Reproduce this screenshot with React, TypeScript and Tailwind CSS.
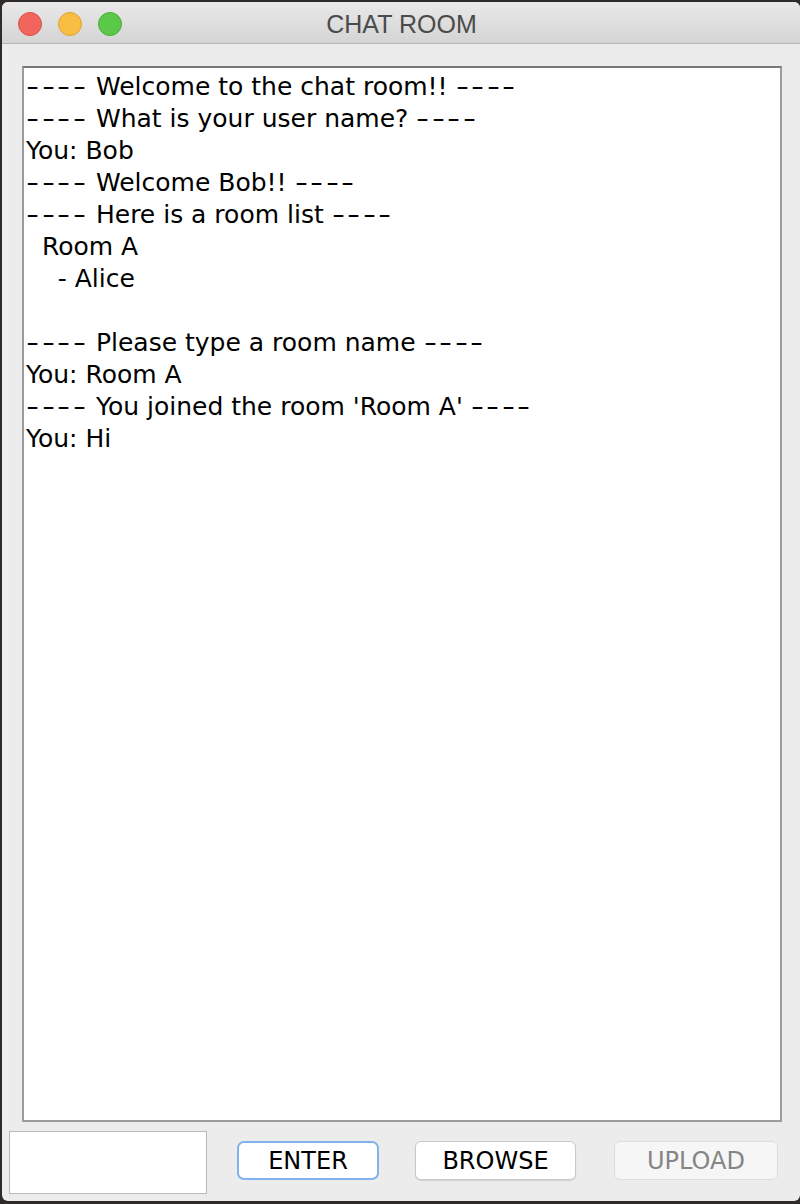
import React from "react";

const lines = [
  "---- Welcome to the chat room!! ----",
  "---- What is your user name? ----",
  "You: Bob",
  "---- Welcome Bob!! ----",
  "---- Here is a room list ----",
  "  Room A",
  "    - Alice",
  "",
  "---- Please type a room name ----",
  "You: Room A",
  "---- You joined the room 'Room A' ----",
  "You: Hi",
];

function Dashes() {
  return (
    <>
      {[0, 1, 2, 3].map((i) => (
        <span key={i} className="inline-block w-[15.5px] overflow-visible">
          <span className="inline-block origin-left scale-x-[1.45]">-</span>
        </span>
      ))}
    </>
  );
}

function Line({ text }: { text: string }) {
  const parts = text.split(/(-{4})/);
  return (
    <div className="h-[32px] leading-[32px] whitespace-pre">
      {parts.map((p, i) =>
        p === "----" ? <Dashes key={i} /> : <span key={i}>{p}</span>
      )}
      {text === "" ? " " : null}
    </div>
  );
}

export default function App() {
  return (
    <div className="w-[800px] h-[1204px] bg-[#2e2b28] pt-[2px] pl-[2px] pb-[3px] flex flex-col">
      <div className="flex-1 flex flex-col rounded-[6px] overflow-hidden bg-[#ececec]">
        {/* Title bar */}
        <div className="relative h-[42px] shrink-0 bg-gradient-to-b from-[#e9e9e9] to-[#d4d4d4] border-b border-[#b5b5b5] flex items-center">
          <div className="flex items-center gap-[16px] pl-[16px] pt-[3px]">
            <div className="w-[24px] h-[24px] rounded-full bg-[#f0665c] border border-[#dc4f45]" />
            <div className="w-[24px] h-[24px] rounded-full bg-[#f8be43] border border-[#dea234]" />
            <div className="w-[24px] h-[24px] rounded-full bg-[#5cc84a] border border-[#47ac37]" />
          </div>
          <div
            className="absolute left-0 right-0 top-0 h-[42px] pt-[4px] flex items-center justify-center text-[25px] text-[#4b4b4b]"
            style={{ fontFamily: '"Liberation Sans", Arial, sans-serif' }}
          >
            <span className="ml-[1px]">CHAT ROOM</span>
          </div>
        </div>

        {/* Body */}
        <div className="flex-1 flex flex-col" style={{ fontFamily: '"DejaVu Sans", sans-serif' }}>
          <div className="pt-[22px] pl-[20px] pr-[18px]">
            <div className="h-[1056px] bg-white border-2 border-[#9b9b9b] border-t-[#777777] pl-[2px] pt-[3px] text-[25px] text-black">
              {lines.map((l, i) => (
                <Line key={i} text={l} />
              ))}
            </div>
          </div>
          <div className="flex items-center mt-[9px] h-[63px]">
            <div className="ml-[7px] w-[198px] h-[63px] bg-white border border-[#b9b9b9]" />
            <button className="ml-[30px] w-[142px] h-[39px] bg-white rounded-[7px] border-[2.5px] border-[#83b3ee] text-[24px] text-black flex items-center justify-center -mt-[4px]">
              ENTER
            </button>
            <button className="ml-[36px] w-[161px] h-[39px] bg-white rounded-[6px] border border-[#c9c9c9] shadow-[0_1px_1px_rgba(0,0,0,0.12)] text-[24px] text-black flex items-center justify-center -mt-[4px]">
              BROWSE
            </button>
            <button className="ml-[38px] w-[164px] h-[39px] bg-[#f6f6f6] rounded-[6px] border border-[#dcdcdc] text-[24px] text-[#858585] flex items-center justify-center -mt-[4px]">
              UPLOAD
            </button>
          </div>
        </div>
      </div>
    </div>
  );
}
